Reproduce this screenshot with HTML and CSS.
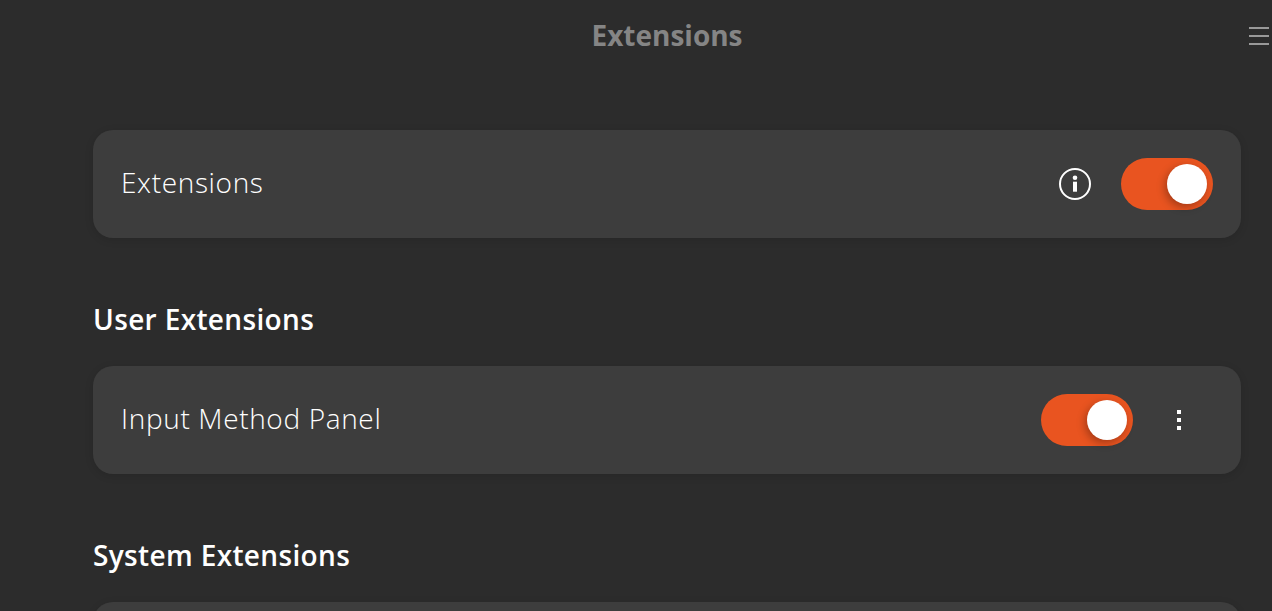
FILE: index.html
```html
<!DOCTYPE html>
<html lang="en">
<head>
    <meta charset="UTF-8">
    <meta name="viewport" content="width=device-width, initial-scale=1.0">
    <title>Extensions</title>
    <link rel="stylesheet" href="styles.css">
</head>
<body>

<header class="titlebar">
    <h1>Extensions</h1>
    <div class="menu-btn">
        <span></span>
        <span></span>
        <span></span>
    </div>
</header>

<main class="content">
    <section class="row-card">
        <span class="row-label">Extensions</span>
        <div class="row-actions">
            <svg class="info-icon" width="32" height="32" viewBox="0 0 32 32">
                <circle cx="16" cy="16" r="15" fill="none" stroke="#fff" stroke-width="2"/>
                <circle cx="16" cy="9.7" r="2.3" fill="#fff"/>
                <rect x="14" y="13.7" width="4" height="10" fill="#fff"/>
            </svg>
            <div class="switch"><div class="knob"></div></div>
        </div>
    </section>

    <h2>User Extensions</h2>
    <section class="row-card">
        <span class="row-label">Input Method Panel</span>
        <div class="row-actions">
            <div class="switch"><div class="knob"></div></div>
            <div class="more-btn">
                <span></span>
                <span></span>
                <span></span>
            </div>
        </div>
    </section>

    <h2>System Extensions</h2>
    <section class="row-card"></section>
</main>

</body>
</html>
```

FILE: styles.css
```css
html, body {
    height: 100%;
    overflow: hidden;
}

body {
    margin: 0;
    font-family: "Open Sans", "Noto Sans", sans-serif;
    background: #2c2c2c;
    color: #fff;
}

.titlebar {
    position: relative;
    height: 70px;
    padding: 0 0 1px 62px;
    box-sizing: border-box;
    display: flex;
    justify-content: center;
    align-items: center;
}

.titlebar h1 {
    margin: 0;
    font-size: 28px;
    font-weight: 700;
    color: #858585;
}

.menu-btn {
    position: absolute;
    top: 27px;
    right: 3px;
    width: 20px;
    display: flex;
    flex-direction: column;
    gap: 6px;
}

.menu-btn span {
    height: 2px;
    background: #999;
}

.content {
    padding: 60px 31px 0 93px;
}

.row-card {
    height: 108px;
    padding: 0 28px;
    display: flex;
    justify-content: space-between;
    align-items: center;
    background: #3d3d3d;
    border-radius: 20px;
    box-shadow: 0 2px 8px rgba(0, 0, 0, 0.12);
}

.row-label {
    padding-bottom: 4px;
    font-size: 28px;
    font-weight: 300;
    letter-spacing: 0.65px;
}

.row-actions {
    display: flex;
    align-items: center;
}

.info-icon {
    margin-right: 30px;
}

.switch {
    width: 92px;
    height: 52px;
    background: #e95420;
    border-radius: 26px;
    display: flex;
    justify-content: flex-end;
    align-items: center;
    padding-right: 6px;
    box-sizing: border-box;
}

.knob {
    width: 40px;
    height: 40px;
    background: #fff;
    border-radius: 50%;
    box-shadow: -2px 3px 8px rgba(0, 0, 0, 0.3);
}

.more-btn {
    width: 92px;
    margin-right: -12px;
    display: flex;
    flex-direction: column;
    align-items: center;
    gap: 4px;
}

.more-btn span {
    width: 4px;
    height: 4px;
    background: #fff;
}

h2 {
    margin: 0;
    height: 128px;
    box-sizing: border-box;
    padding-top: 61px;
    font-size: 28px;
    line-height: 40px;
    font-weight: 600;
    letter-spacing: 0.35px;
}
```
